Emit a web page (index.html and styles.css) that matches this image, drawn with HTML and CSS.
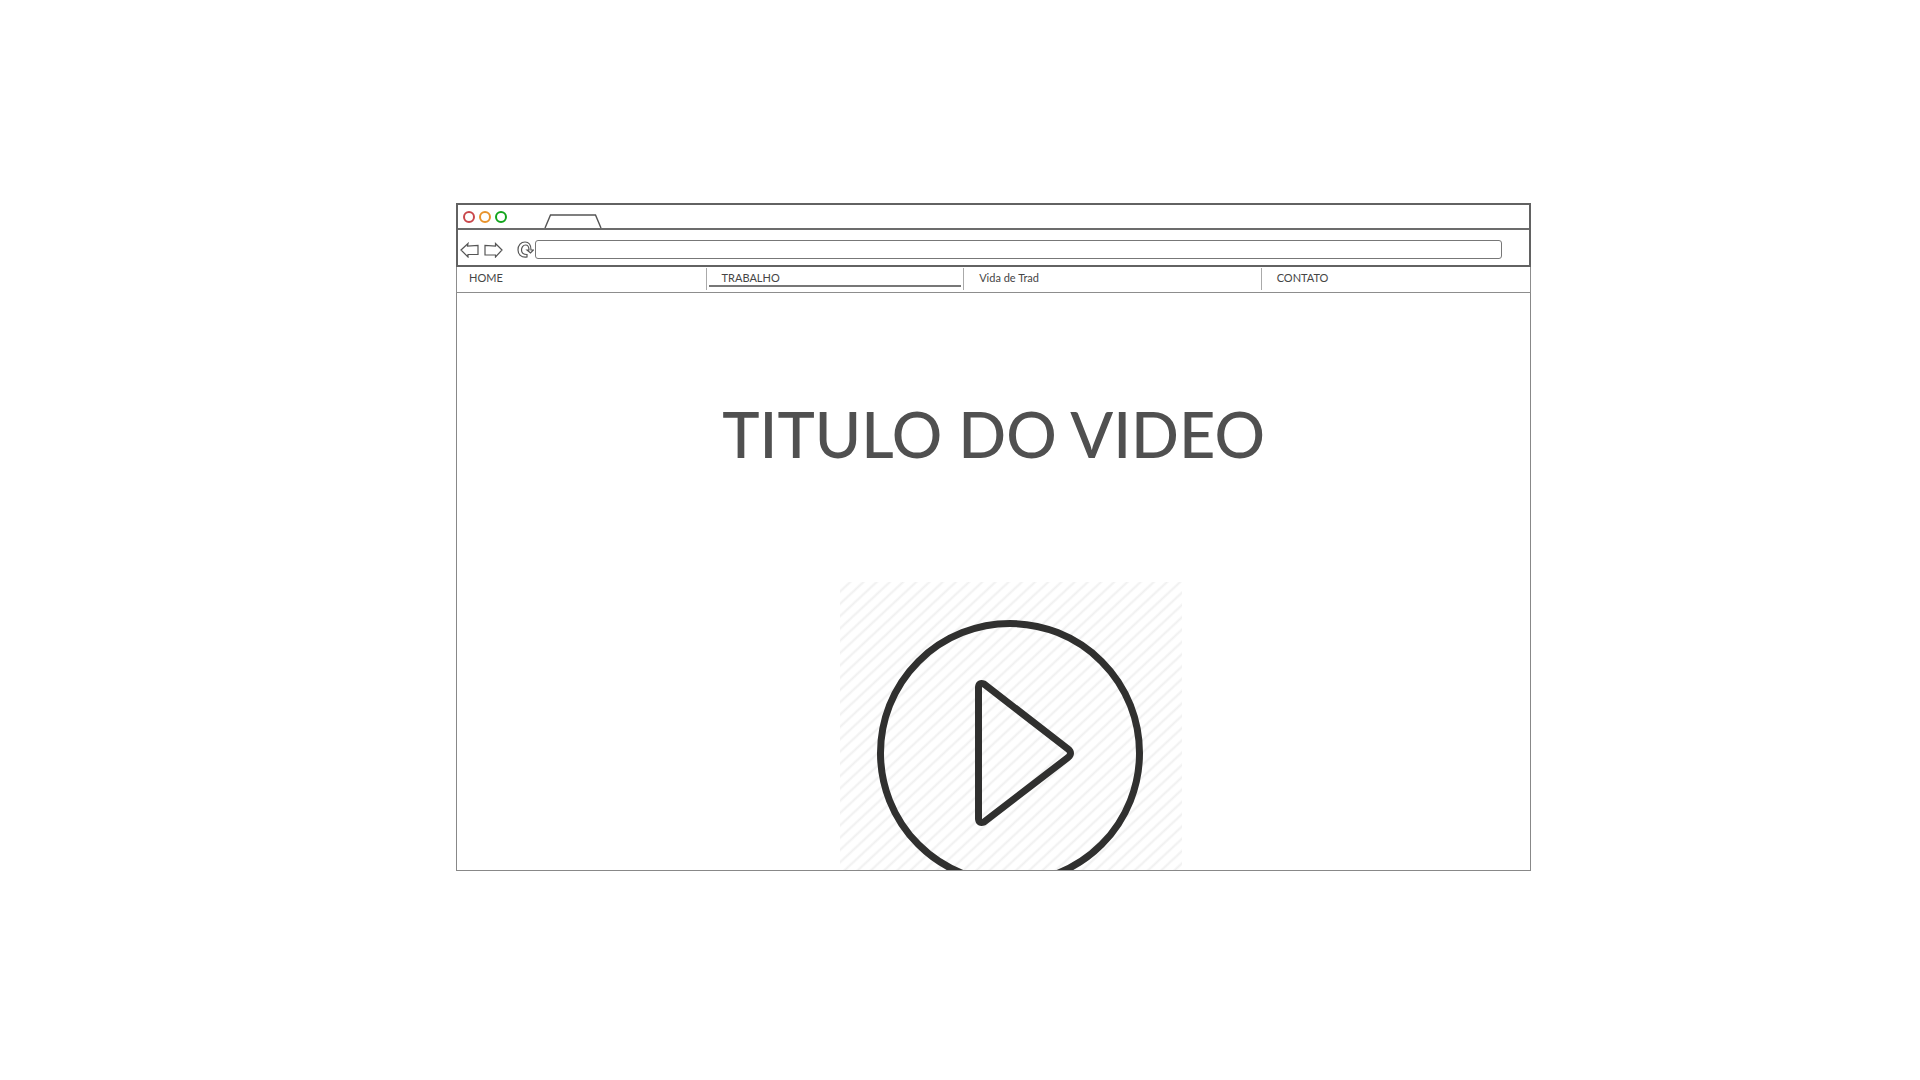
FILE: index.html
```html
<!DOCTYPE html>
<html lang="pt-BR">
<head>
<meta charset="utf-8">
<title>Titulo do video</title>
<link rel="stylesheet" href="styles.css">
</head>
<body>
<div class="browser">
  <header class="chrome">
    <div class="tabbar">
      <svg class="lights" width="38" height="12" viewBox="0 0 38 12" fill="none" stroke-width="2">
        <circle cx="6" cy="6" r="5" stroke="#c9474b"/>
        <circle cx="22" cy="6" r="5" stroke="#e8932c"/>
        <circle cx="38" cy="6" r="5" stroke="#12a51c"/>
      </svg>
      <svg class="tab" width="58" height="14" viewBox="0 0 58 14" fill="none" stroke="#555" stroke-width="1.4"><path d="M1 14 6.500 1H51.500L57 14"/></svg>
    </div>
    <div class="toolbar">
      <button class="tool" type="button" aria-label="Voltar"><svg width="19" height="16" viewBox="0 0 19 16"><path d="M1 8 8 1.500 7.500 4 18 3.500V12.500L8 12.500V15Z"/></svg></button>
      <button class="tool" type="button" aria-label="Avançar"><svg width="19" height="16" viewBox="0 0 19 16"><path d="M18 8 11.500 1.500V4L1 3.500V13H11.500V15Z"/></svg></button>
      <button class="tool reload" type="button" aria-label="Recarregar"><svg width="17" height="17" viewBox="0 0 17 17"><path d="M10 16C4 17 1 13 1 9C1 4 4 1 8 1C12 1 14 4 14 9H16.500L13.500 12 10 9H12C12 6 10.500 4 8.500 4C6 4 4.500 6.500 4.500 9C4.500 12 6.500 13.500 10 13.500Z"/></svg></button>
      <input class="address" type="text" aria-label="Endereço">
    </div>
  </header>
  <nav class="menu">
    <a href="#">HOME</a>
    <a href="#" class="current">TRABALHO</a>
    <a href="#">Vida de Trad</a>
    <a href="#">CONTATO</a>
  </nav>
  <main class="page">
    <h1>TITULO DO VIDEO</h1>
    <button class="video" type="button" aria-label="Reproduzir">
      <svg viewBox="0 0 342 342" fill="none" stroke="#30302f" stroke-width="7">
        <circle cx="170" cy="171" r="129.500"/>
        <path d="M138.500 105Q139 100 144 102L228 167Q233 171 228 175.500L144 240Q139 242 138.500 237Z" stroke-linejoin="round"/>
      </svg>
    </button>
  </main>
</div>
</body>
</html>
```
FILE: styles.css
```css
* { box-sizing: border-box; }
body {
  margin: 0;
  background: #fff;
  color: #505050;
  font-family: "Segoe Print", "Ink Free", Lato, sans-serif;
}
.browser {
  width: 56%;
  margin: 203px 0 0 23.75%;
}
.chrome { border: 2px solid #626262; }
.tabbar {
  display: flex;
  align-items: flex-end;
  gap: 43px;
  height: 25px;
  padding-left: 5px;
  border-bottom: 2px solid #6c6c6c;
}
.lights { margin-bottom: 5px; overflow: visible; }
.tab { display: block; }
.toolbar {
  display: flex;
  align-items: center;
  gap: 5px;
  height: 35px;
  padding: 4px 27px 0 2px;
}
.tool {
  display: flex;
  padding: 0;
  border: 0;
  background: none;
}
.tool svg { fill: none; stroke: #555; stroke-width: 1.2; }
.reload { margin-left: 9px; margin-right: -4px; }
.address {
  flex: 1;
  min-width: 0;
  height: 19px;
  border: 1px solid #777;
  border-radius: 3px;
  background: #fff;
}
.menu {
  display: grid;
  grid-template-columns: 249fr 258fr 298fr 270fr;
  height: 26px;
  padding-top: 1px;
  border: 1px solid #8d8d8d;
  border-top: 0;
}
.menu a {
  height: 22px;
  padding-left: 15px;
  border-left: 1px solid #aaa;
  color: #454545;
  font-size: 11px;
  line-height: 20px;
  text-decoration: none;
}
.menu a:first-child { padding-left: 12px; border-left: 0; }
.current {
  background: linear-gradient(#777, #777) 2px 17px / calc(100% - 4px) 2px no-repeat;
}
.page {
  display: flex;
  flex-direction: column;
  align-items: center;
  height: 578px;
  overflow: hidden;
  border: 1px solid #888;
  border-top: 0;
}
h1 {
  margin: 97px 0 0;
  font-size: 63px;
  font-weight: 500;
  line-height: 88px;
  white-space: nowrap;
}
.video {
  flex: none;
  width: 342px;
  margin: 104px 0 0 34px;
  padding: 0;
  border: 0;
  background: repeating-linear-gradient(137deg, #fff 0, #fff 5px, #f0f0f0 7px, #fff 9px);
}
.video svg { display: block; }
```
